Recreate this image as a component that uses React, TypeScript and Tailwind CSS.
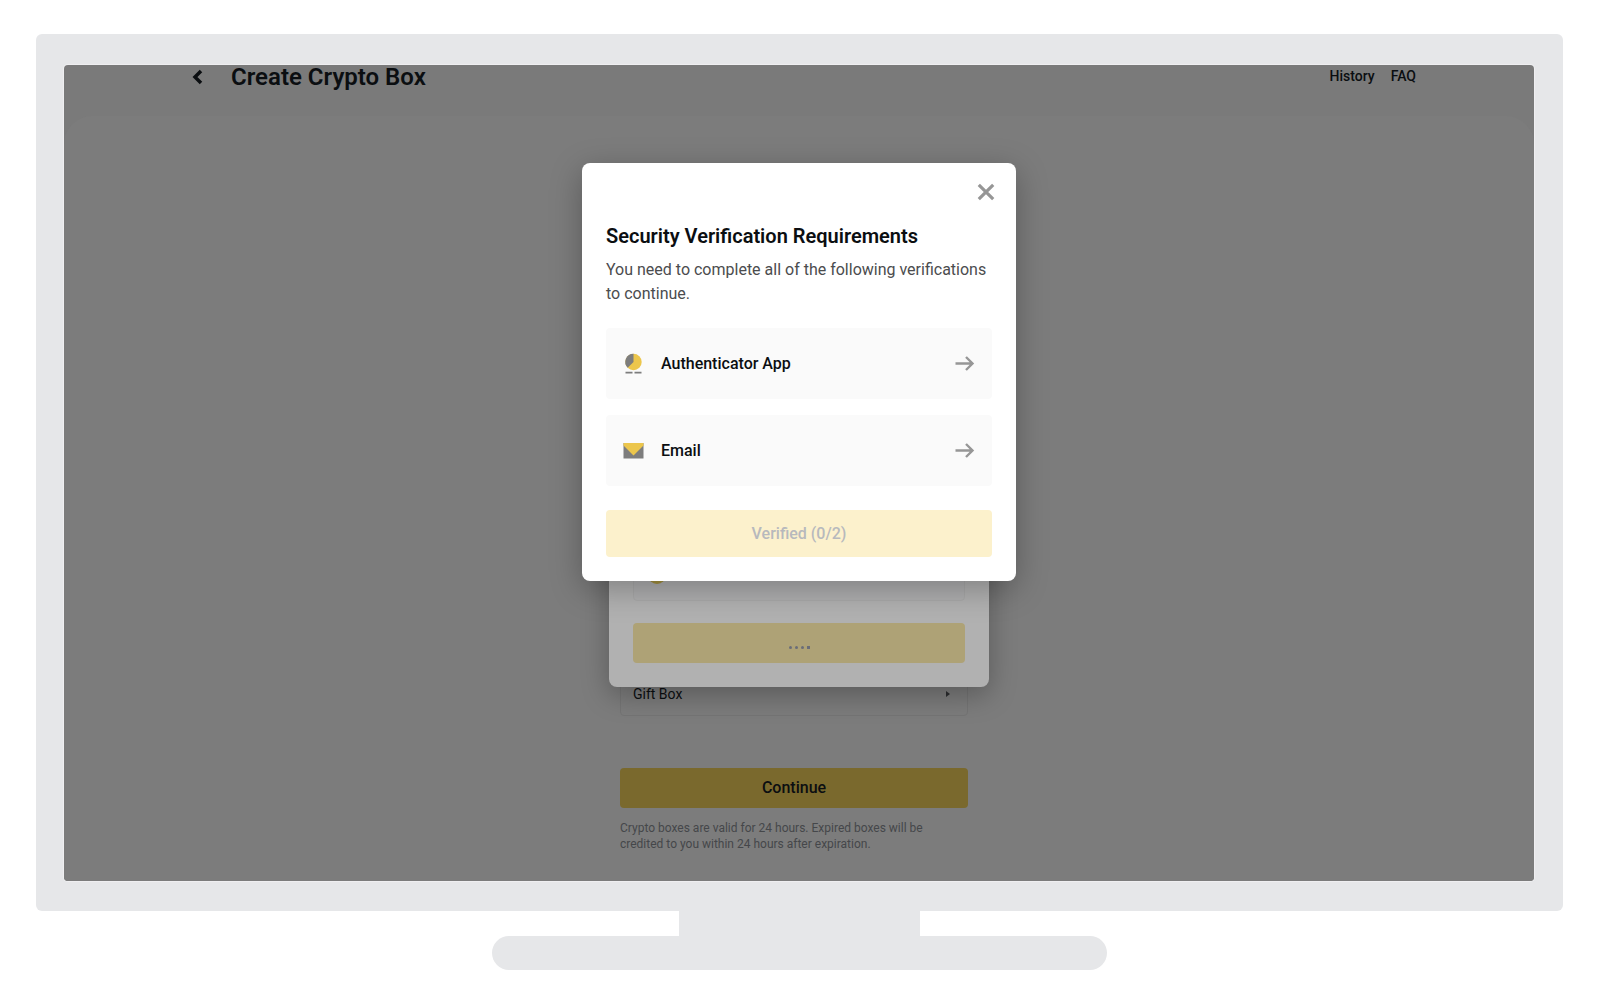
import { ChevronLeft } from 'lucide-react';

const AuthenticatorIcon = () => (
  <svg viewBox="0 0 24 24" className="size-6" aria-hidden="true">
    <circle cx="12.5" cy="10" r="8.2" fill="#ecc64c" />
    <path d="M12.5 10V1.800a8.200 8.200 0 0 0-5.800 14z" fill="#7d7d7d" />
    <path d="M4.500 19.800h7v1.800h-7zM13.500 19.800h7v1.800h-7z" fill="#7d7d7d" />
  </svg>
);

const EmailIcon = () => (
  <svg viewBox="0 0 24 24" className="size-6" aria-hidden="true">
    <path d="M2.500 4h20v15.500h-20z" fill="#7d7d7d" />
    <path d="M2.500 4h20v2.500l-10 10-10-10z" fill="#ecc64c" />
  </svg>
);

const ArrowIcon = () => (
  <svg viewBox="0 0 24 24" className="ml-auto size-6" fill="none" stroke="#969696" strokeWidth="2.400" aria-hidden="true">
    <path d="M3.500 11.500h17M14 5l6.500 6.500-6.500 6.500" />
  </svg>
);

const CloseIcon = () => (
  <svg viewBox="0 0 24 24" className="size-6" fill="none" stroke="#969696" strokeWidth="3.200" aria-hidden="true">
    <path d="M4.800 4.800l14.400 14.400M19.200 4.800L4.800 19.200" />
  </svg>
);

const methods = [
  { name: 'Authenticator App', icon: AuthenticatorIcon },
  { name: 'Email', icon: EmailIcon },
];

const CreateCryptoBox = () => (
  <>
    <header className="flex h-[51px] items-start justify-between pl-[122px] pr-[118px] text-[#0b0e11]">
      <div className="flex items-center gap-[21px]">
        <button type="button" aria-label="Back">
          <ChevronLeft className="size-6" strokeWidth={3.5} strokeLinecap="butt" strokeLinejoin="miter" />
        </button>
        <h1 className="text-2xl leading-6 font-semibold">Create Crypto Box</h1>
      </div>
      <nav className="flex gap-4 text-sm leading-[22px] font-medium">
        <a href="#history">History</a>
        <a href="#faq">FAQ</a>
      </nav>
    </header>
    <main className="flex justify-center rounded-t-[28px] rounded-b bg-[#7c7c7c] pt-[556px] pr-[10px] pb-[29px]">
      <div className="w-[348px]">
        <button
          type="button"
          className="flex h-11 w-full items-center justify-between rounded border border-[#747474] px-3 text-sm text-[#0b0e11]"
        >
          Gift Box
          <svg viewBox="0 0 6 8" className="mr-1 h-2 w-[6px]" aria-hidden="true">
            <path d="M1 1l4 3-4 3z" fill="#2c2d2f" />
          </svg>
        </button>
        <button
          type="button"
          className="mt-[52px] h-10 w-full rounded bg-[#7a692d] text-base font-medium text-[#0b0e11]"
        >
          Continue
        </button>
        <p className="mt-3 text-xs leading-4 text-[#45474a]">
          Crypto boxes are valid for 24 hours. Expired boxes will be
          <br />
          credited to you within 24 hours after expiration.
        </p>
      </div>
    </main>
  </>
);

const LoadingDialog = () => (
  <div className="absolute inset-x-0 top-[133px] flex justify-center">
    <div className="w-[380px] rounded-lg bg-[#b1b1b1] px-6 pt-[313px] pb-6 shadow-[0_8px_28px_rgba(0,0,0,0.28)]">
      <div className="flex h-[90px] items-end rounded border border-[#a9a9a9] bg-[#afafb0] px-[14px] pb-4">
        <span className="size-[18px] rounded-full bg-[#a3913f]" />
      </div>
      <button
        type="button"
        aria-label="Loading"
        className="mt-[22px] flex h-10 w-full items-center justify-center gap-[3px] rounded bg-[#aea276] pt-2"
      >
        <span className="size-[3px] rounded-full bg-[#6a6d78]" />
        <span className="size-[3px] rounded-full bg-[#6a6d78]" />
        <span className="size-[3px] rounded-full bg-[#6a6d78]" />
        <span className="size-[3px] bg-[#6a6d78]" />
      </button>
    </div>
  </div>
);

const VerificationDialog = () => (
  <div className="absolute inset-x-0 top-[98px] flex justify-center">
    <section
      role="dialog"
      aria-labelledby="verification-title"
      className="w-[434px] rounded-lg bg-white px-6 pt-[17px] pb-6 text-[#0b0e11] shadow-[0_8px_32px_rgba(0,0,0,0.28)]"
    >
      <div className="-mr-[6px] flex justify-end">
        <button type="button" aria-label="Close">
          <CloseIcon />
        </button>
      </div>
      <h2 id="verification-title" className="mt-[18px] text-xl leading-7 font-semibold">
        Security Verification Requirements
      </h2>
      <p className="mt-2 text-base leading-6 text-[#4b4c4e]">
        You need to complete all of the following verifications to continue.
      </p>
      <ul className="mt-[22px] space-y-4">
        {methods.map(({ name, icon: Icon }) => (
          <li key={name}>
            <button
              type="button"
              className="flex h-[71px] w-full items-center rounded bg-[#fafafa] pr-4 pl-[15px] text-base font-medium"
            >
              <Icon />
              <span className="ml-4">{name}</span>
              <ArrowIcon />
            </button>
          </li>
        ))}
      </ul>
      <button
        type="button"
        disabled
        className="mt-6 h-[47px] w-full rounded bg-[#fcf1cc] text-base font-medium text-[#b7b9bd]"
      >
        Verified (0/2)
      </button>
    </section>
  </div>
);

export default function App() {
  return (
    <div className="min-h-screen bg-white pt-[34px] pr-[37px] pb-8 pl-9 font-[Roboto,sans-serif]">
      {/* Monitor */}
      <div className="rounded-md bg-[#e6e7e9] pt-[31px] pr-[29px] pb-[30px] pl-7">
        <div className="relative rounded bg-[#7a7a7a] shadow-[0_0_1px_1px_rgba(255,255,255,0.4)]">
          <CreateCryptoBox />
          <LoadingDialog />
          <VerificationDialog />
        </div>
      </div>
      {/* Stand */}
      <div className="mx-auto h-[25px] w-[241px] bg-[#e6e7e9]" />
      <div className="mx-auto h-[34px] w-[615px] rounded-full bg-[#e6e7e9]" />
    </div>
  );
}
